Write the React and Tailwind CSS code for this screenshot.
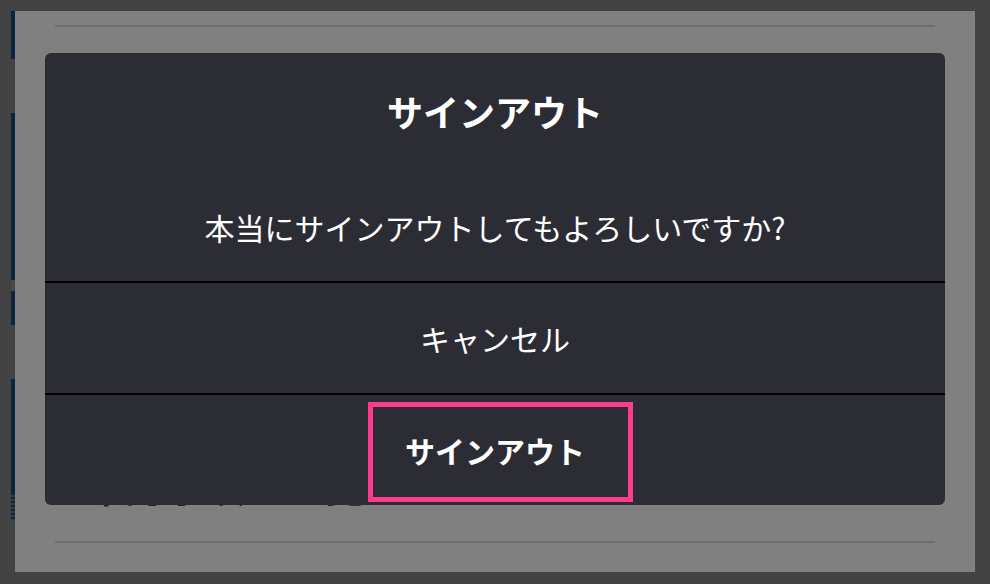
import React from 'react'

const jp = { fontFamily: '"Noto Sans CJK JP", "Noto Sans", sans-serif' }

function SideStrip() {
  return (
    <div className="w-[15px] pl-[11px] flex flex-col">
      <div className="h-[48px] bg-[#0b2540]" />
      <div className="h-[54px]" />
      <div className="h-[167px] bg-[#0b2540]" />
      <div className="h-[11px] bg-[#4a4a4a]" />
      <div className="h-[34px] bg-[#0b2540]" />
      <div className="h-[54px]" />
      <div className="h-[114px] bg-[#0b2540]" />
      <div className="h-[27px] bg-[repeating-linear-gradient(#0b2540_0_2px,#3a3a3a_2px_4px)]" />
    </div>
  )
}

export default function App() {
  return (
    <div className="relative w-[990px] h-[584px] bg-[#434343] overflow-hidden" style={jp}>
      {/* page behind the dialog */}
      <div className="flex h-full pt-[11px] pb-[12px] pr-[15px]">
        <SideStrip />
        <div className="flex-1 bg-[#808080] px-[40px] flex flex-col">
          <div className="mt-[14px] h-[2px] bg-[#6e6e6e]" />
          <div className="flex-1" />
          <div className="flex items-center justify-between pl-[30px] pr-[25px] h-[48px] mb-[32px]">
            <span className="text-[40px] leading-[48px] font-bold text-[#1e1e1e]">確認事項の一覧</span>
            <span className="text-[28px] text-[#6a6a6a]">›</span>
          </div>
          <div className="h-[2px] bg-[#6e6e6e] mb-[29px]" />
        </div>
      </div>

      {/* dialog */}
      <div className="absolute left-[45px] top-[53px] w-[900px] h-[452px] rounded-[6px] bg-[#2c2c35] flex flex-col text-white overflow-hidden">
        <div className="h-[228px] flex flex-col items-center">
          <h1 className="mt-[37px] text-[36px] leading-[42px] font-bold">サインアウト</h1>
          <p className="mt-[76px] text-[30px] leading-[38px]">本当にサインアウトしてもよろしいですか?</p>
        </div>
        <div className="h-[2px] bg-black" />
        <button className="h-[110px] flex items-center justify-center text-[30px]">キャンセル</button>
        <div className="h-[2px] bg-black" />
        <button className="flex-1 flex items-center justify-center text-[30px] font-bold">サインアウト</button>
      </div>

      {/* highlight annotation */}
      <div className="absolute left-[368px] top-[402px] w-[265px] h-[100px] border-[5px] border-[#ff3b8d]" />
    </div>
  )
}
